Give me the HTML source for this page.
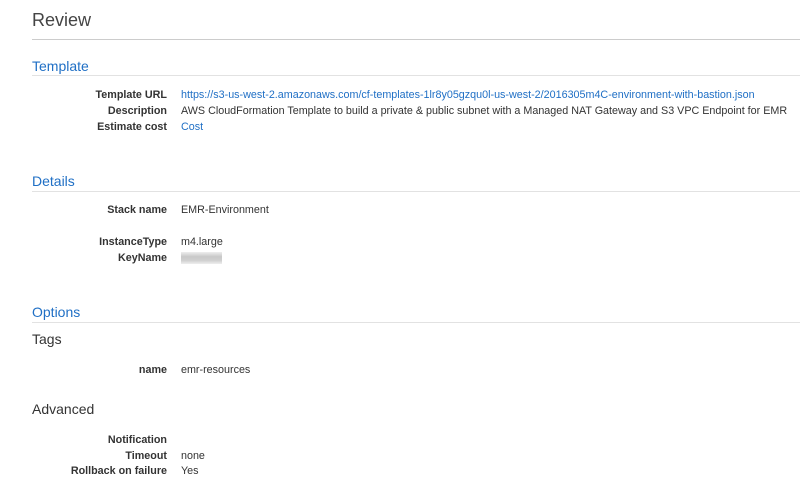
<!DOCTYPE html>
<html><head><style>
body{margin:0;width:800px;height:496px;background:#fff;font-family:"Liberation Sans",Arial,sans-serif;position:relative;overflow:hidden;color:#333}
.a{position:absolute;white-space:nowrap}
.h1{left:32px;top:10px;font-size:18px;color:#444}
.sec{left:32px;font-size:14px;color:#1f6fc5}
.sub{left:32px;font-size:14px;color:#333}
.line{position:absolute;left:32px;right:0;height:1px;background:#e2e2e2}
.lab{right:633px;font-size:10.75px;font-weight:bold;color:#333;text-align:right}
.val{left:181px;font-size:10.75px;color:#333}
.lnk{color:#1f6fc5}
</style></head><body>
<div class="a h1">Review</div>
<div class="line" style="top:39px;background:#ccc"></div>

<div class="a sec" style="top:58px">Template</div>
<div class="line" style="top:75px"></div>
<div class="a lab" style="top:89px">Template URL</div>
<div class="a val lnk" style="top:89px">https://s3-us-west-2.amazonaws.com/cf-templates-1lr8y05gzqu0l-us-west-2/2016305m4C-environment-with-bastion.json</div>
<div class="a lab" style="top:105px">Description</div>
<div class="a val" style="top:105px">AWS CloudFormation Template to build a private &amp; public subnet with a Managed NAT Gateway and S3 VPC Endpoint for EMR</div>
<div class="a lab" style="top:121px">Estimate cost</div>
<div class="a val lnk" style="top:121px">Cost</div>

<div class="a sec" style="top:173px">Details</div>
<div class="line" style="top:191px"></div>
<div class="a lab" style="top:204px">Stack name</div>
<div class="a val" style="top:204px">EMR-Environment</div>
<div class="a lab" style="top:236px">InstanceType</div>
<div class="a val" style="top:236px">m4.large</div>
<div class="a lab" style="top:252px">KeyName</div>
<div class="a" style="left:181px;top:252px;width:41px;height:12px;background:linear-gradient(#eee,#c8c8c8 40%,#d0d0d0 70%,#eee)"></div>

<div class="a sec" style="top:304px">Options</div>
<div class="line" style="top:322px"></div>
<div class="a sub" style="top:331px">Tags</div>
<div class="a lab" style="top:364px">name</div>
<div class="a val" style="top:364px">emr-resources</div>
<div class="a sub" style="top:401px">Advanced</div>
<div class="a lab" style="top:434px">Notification</div>
<div class="a lab" style="top:450px">Timeout</div>
<div class="a val" style="top:450px">none</div>
<div class="a lab" style="top:465px">Rollback on failure</div>
<div class="a val" style="top:465px">Yes</div>
</body></html>
